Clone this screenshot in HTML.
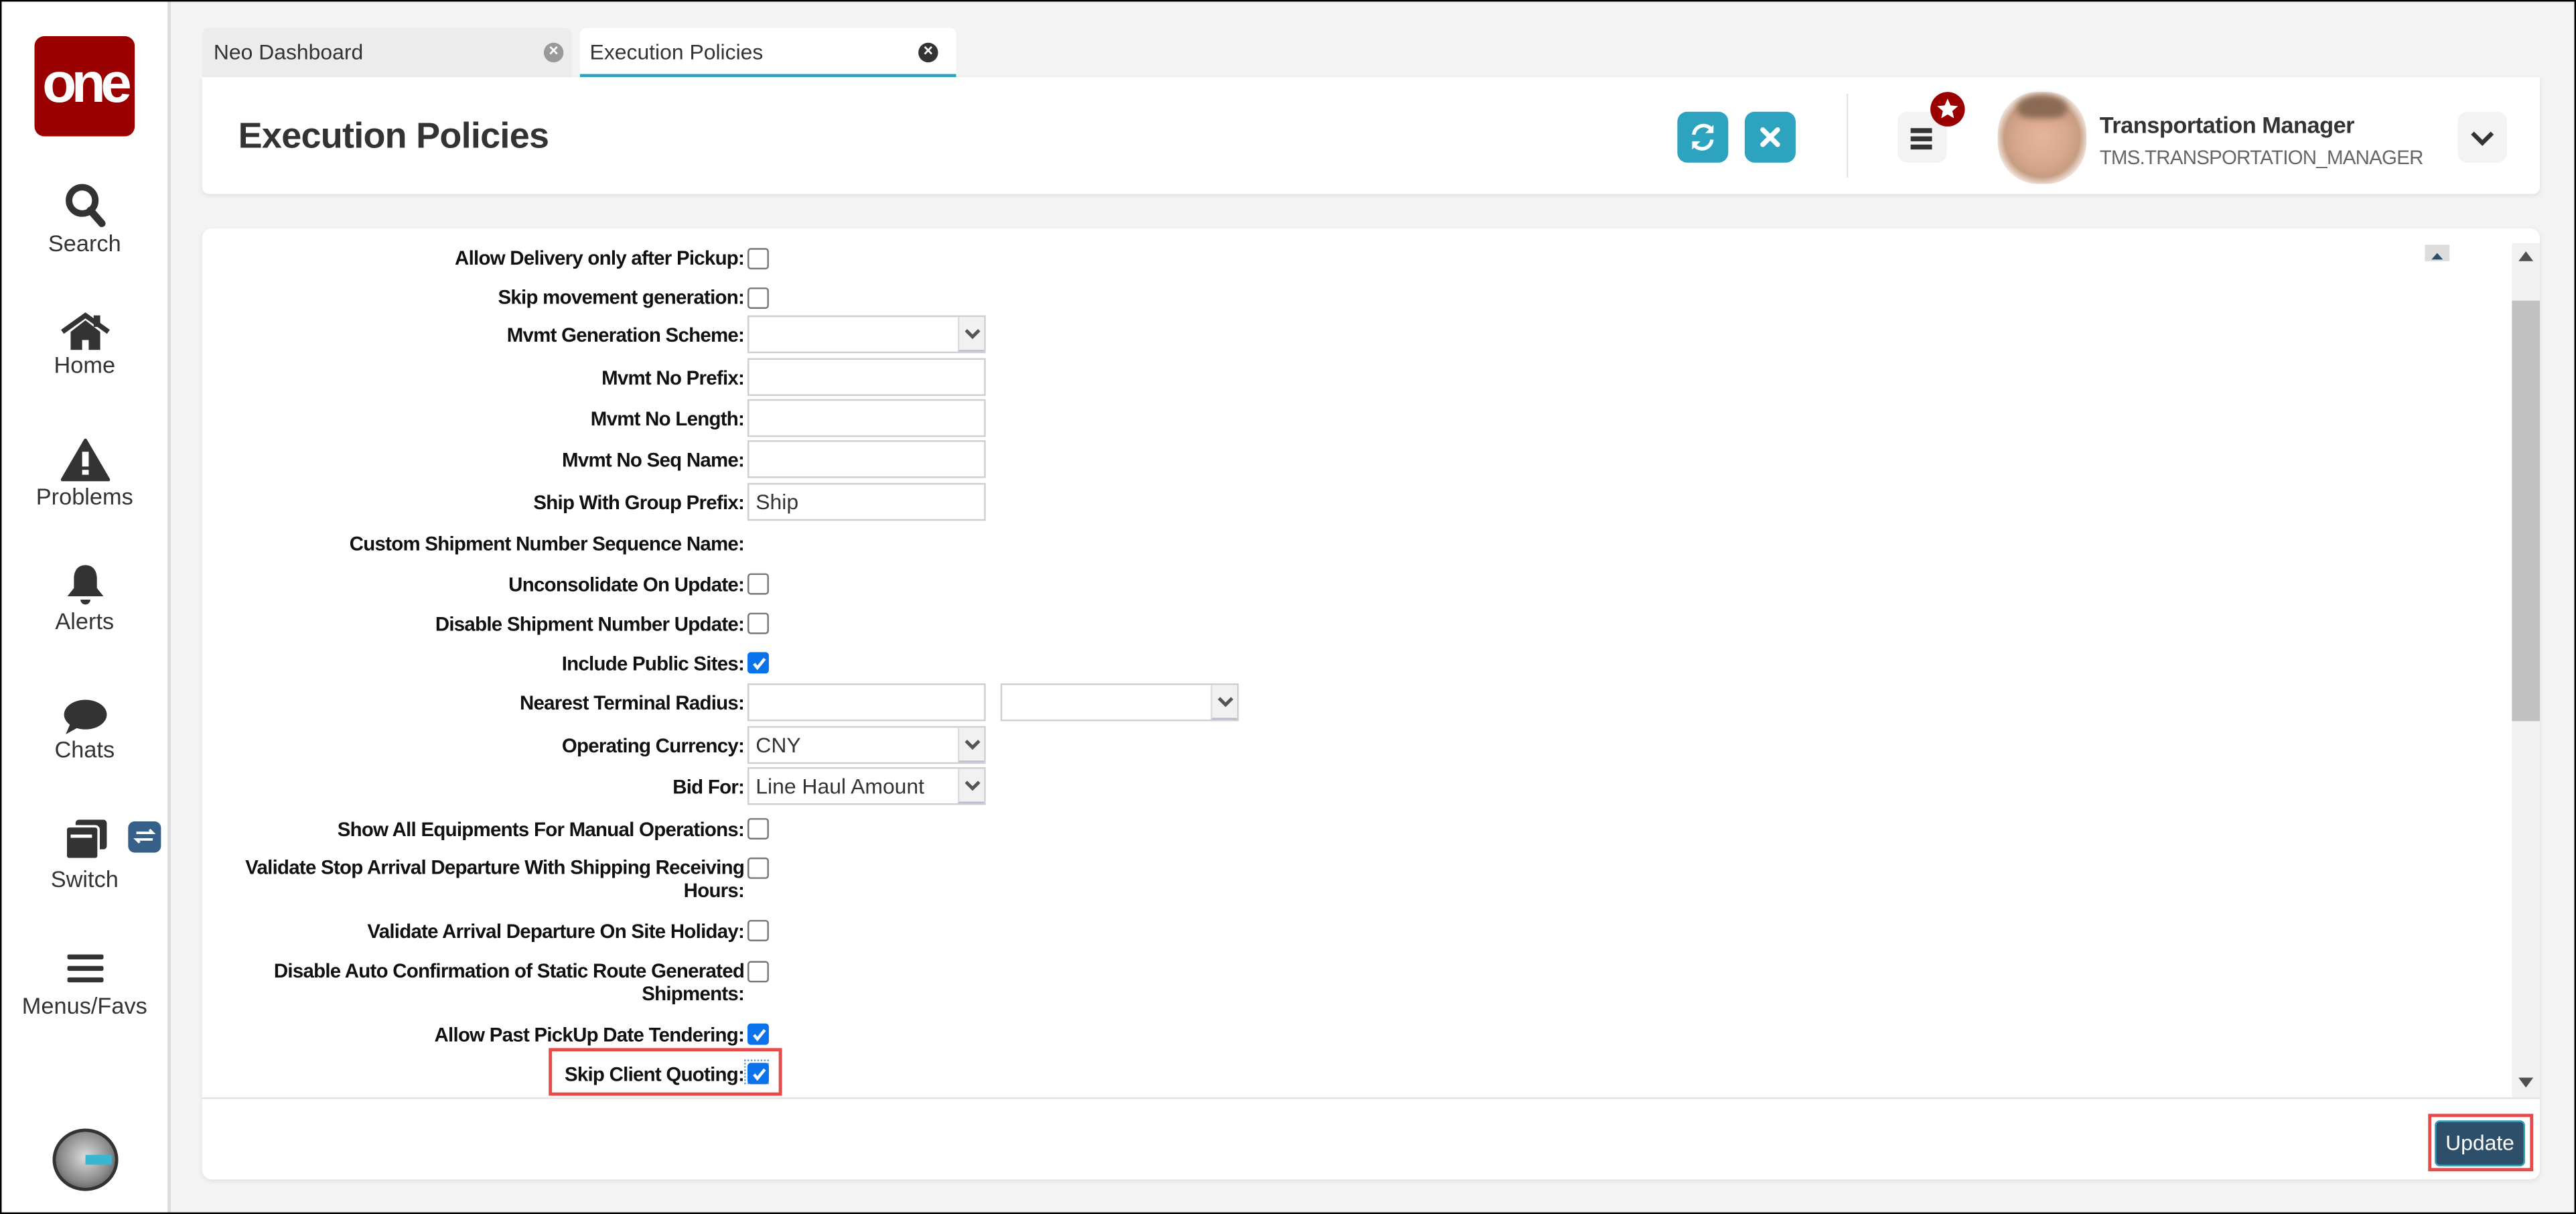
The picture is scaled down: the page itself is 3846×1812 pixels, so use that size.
<!DOCTYPE html>
<html><head><meta charset="utf-8"><style>
html,body{margin:0;padding:0;background:#000;overflow:hidden;}
#root{position:absolute;left:0;top:0;width:1568px;height:739px;transform:scale(2.45281,2.45196);transform-origin:0 0;background:#000;font-family:"Liberation Sans",sans-serif;}
#app{position:absolute;left:1px;top:1px;width:1566px;height:737px;background:#f3f3f3;overflow:hidden;}
.a{position:absolute;}
#side{left:0;top:0;width:101px;height:737px;background:#fff;border-right:2px solid #dcdcdc;}
.nav{position:absolute;left:0;width:101px;text-align:center;font-size:14px;color:#333;}
.nav svg{display:block;margin:0 auto;}
.lbl{position:absolute;right:1114px;font-size:12px;font-weight:bold;color:#111;text-align:right;white-space:nowrap;line-height:14px;letter-spacing:-0.3px;}
.cb{position:absolute;left:454px;width:11px;height:11px;border:1px solid #777;border-radius:2px;background:#fff;}
.cb.on{background:#0a72ea;border-color:#0a72ea;}
.inp{position:absolute;left:454px;width:139px;height:21px;border:1px solid #cfcfcf;background:#fff;font-size:13px;color:#333;line-height:21px;padding-left:4px;box-sizing:content-box;}
.sel{width:139px;}
.sel .ar{position:absolute;right:0;top:0;width:16px;height:21px;background:#f1f1f1;border-left:1px solid #ddd;border-bottom:1px solid #bbbbd0;box-sizing:border-box;}
</style></head><body><div id="root"><div id="app">
<div id="side" class="a">
 <div class="a" style="left:20px;top:21px;width:61px;height:61px;background:#9b0000;border-radius:6px;color:#fff;font-size:34px;font-weight:bold;text-align:center;line-height:58px;letter-spacing:-3px;">one</div>
 <div class="nav" style="top:110px"><svg width="26" height="28" viewBox="0 0 26 28"><circle cx="11" cy="11" r="8" fill="none" stroke="#333" stroke-width="4"/><path d="M16 17l7 8" stroke="#333" stroke-width="4.5" stroke-linecap="round"/></svg><div style="margin-top:1px">Search</div></div>
 <div class="nav" style="top:189px"><svg width="30" height="24" viewBox="0 0 30 24"><path d="M1 12L15 2l14 10" fill="none" stroke="#333" stroke-width="3"/><path d="M6 12v11h7v-6h4v6h7V12L15 5z" fill="#333"/><rect x="20" y="2" width="4" height="7" fill="#333"/></svg><div style="margin-top:0px">Home</div></div>
 <div class="nav" style="top:266px"><svg width="30" height="26" viewBox="0 0 30 26"><path d="M15 1L29 25H1z" fill="#333" stroke="#333" stroke-linejoin="round" stroke-width="2"/><rect x="13" y="8" width="4" height="9" fill="#fff"/><rect x="13" y="19" width="4" height="3" fill="#fff"/></svg><div style="margin-top:1px">Problems</div></div>
 <div class="nav" style="top:342px"><svg width="24" height="26" viewBox="0 0 24 26"><path d="M12 1c-5 0-7 4-7 8v6l-4 5h22l-4-5V9c0-4-2-8-7-8z" fill="#333"/><path d="M9 22a3 3 0 0 0 6 0z" fill="#333"/></svg><div style="margin-top:1px">Alerts</div></div>
 <div class="nav" style="top:424px"><svg width="28" height="24" viewBox="0 0 28 24"><ellipse cx="14" cy="10" rx="13" ry="9" fill="#333"/><path d="M5 15L2 22l9-5z" fill="#333"/></svg><div style="margin-top:-1px">Chats</div></div>
 <div class="nav" style="top:497px"><svg width="28" height="26" viewBox="0 0 28 26"><rect x="8" y="1" width="19" height="18" rx="2" fill="#333"/><rect x="2" y="5" width="20" height="20" rx="2" fill="#333" stroke="#fff" stroke-width="1.5"/><rect x="5" y="10" width="13" height="2" fill="#fff"/></svg><div style="margin-top:3px">Switch</div></div>
 <div class="a" style="left:77px;top:499px;width:20px;height:19px;background:#366087;border-radius:4px;"><svg width="20" height="19" viewBox="0 0 20 19"><path d="M5 7h10l-2-2M15 11H5l2 2" stroke="#fff" stroke-width="1.5" fill="none"/></svg></div>
 <div class="nav" style="top:578px"><svg width="24" height="22" viewBox="0 0 24 22"><rect x="1" y="2" width="22" height="3" rx="1" fill="#333"/><rect x="1" y="9" width="22" height="3" rx="1" fill="#333"/><rect x="1" y="16" width="22" height="3" rx="1" fill="#333"/></svg><div style="margin-top:3px">Menus/Favs</div></div>
 <div class="a" style="left:31px;top:686px;width:40px;height:38px;border-radius:50%;background:radial-gradient(circle at 50% 45%,#ddd,#888 60%,#333);border:2px solid #333;box-sizing:border-box;"><div class="a" style="left:18px;top:14px;width:16px;height:6px;background:#3ab6d0;"></div></div>
</div>
<div class="a" style="left:122px;top:16px;width:225px;height:30px;background:#ececec;border-radius:4px 4px 0 0;font-size:13px;color:#333;line-height:30px;"><span style="margin-left:7px">Neo Dashboard</span>
 <div class="a" style="left:208px;top:9px;width:12px;height:12px;border-radius:50%;background:#999;color:#fff;font-size:10px;line-height:12px;text-align:center;font-weight:bold;">×</div></div>
<div class="a" style="left:352px;top:16px;width:229px;height:28px;background:#fff;border-radius:4px 4px 0 0;border-bottom:2px solid #2ea3bf;font-size:13px;color:#333;line-height:30px;"><span style="margin-left:6px">Execution Policies</span>
 <div class="a" style="left:206px;top:9px;width:12px;height:12px;border-radius:50%;background:#333;color:#fff;font-size:10px;line-height:12px;text-align:center;font-weight:bold;">×</div></div>
<div class="a" style="left:122px;top:46px;width:1423px;height:71px;background:#fff;border-radius:0 0 4px 4px;box-shadow:0 1px 3px rgba(0,0,0,.08);">
 <div class="a" style="left:22px;top:23px;font-size:22px;font-weight:bold;color:#333;letter-spacing:-0.3px;">Execution Policies</div>
 <div class="a" style="left:898px;top:21px;width:31px;height:31px;background:#2ea3bf;border-radius:6px;"><svg width="31" height="31" viewBox="0 0 31 31"><path d="M10 14a6 6 0 0 1 10-4l1 1M21 17a6 6 0 0 1-10 4l-1-1" fill="none" stroke="#fff" stroke-width="2.2"/><path d="M22 8v5h-5zM9 23v-5h5z" fill="#fff"/></svg></div>
 <div class="a" style="left:939px;top:21px;width:31px;height:31px;background:#2ea3bf;border-radius:6px;"><svg width="31" height="31" viewBox="0 0 31 31"><path d="M11 11l9 9M20 11l-9 9" stroke="#fff" stroke-width="3" stroke-linecap="round"/></svg></div>
 <div class="a" style="left:1001px;top:10px;width:1px;height:51px;background:#e6e6e6;"></div>
 <div class="a" style="left:1032px;top:21px;width:30px;height:31px;background:#f3f3f3;border-radius:6px;"><svg width="30" height="31" viewBox="0 0 30 31"><rect x="8" y="10" width="13" height="3" fill="#333"/><rect x="8" y="15" width="13" height="3" fill="#333"/><rect x="8" y="20" width="13" height="3" fill="#333"/></svg></div>
 <div class="a" style="left:1052px;top:9px;width:21px;height:21px;border-radius:50%;background:#9b0000;"><svg width="21" height="21" viewBox="0 0 21 21"><path d="M10.5 4l1.8 4.2 4.5.4-3.4 3 1 4.4-3.9-2.3-3.9 2.3 1-4.4-3.4-3 4.5-.4z" fill="#fff"/></svg></div>
 <div class="a" style="left:1093px;top:9px;width:54px;height:56px;border-radius:45%;background:radial-gradient(ellipse at 50% 50%,#e6b49a 0%,#d9a88e 40%,#c79d82 60%,rgba(255,255,255,0) 78%);"><div class="a" style="left:12px;top:2px;width:30px;height:14px;border-radius:50% 50% 30% 30%;background:#8a6a55;filter:blur(2px);"></div></div>
 <div class="a" style="left:1155px;top:21px;font-size:14px;font-weight:bold;color:#333;letter-spacing:-0.2px;">Transportation Manager</div>
 <div class="a" style="left:1155px;top:42px;font-size:12px;color:#666;letter-spacing:-0.3px;">TMS.TRANSPORTATION_MANAGER</div>
 <div class="a" style="left:1373px;top:21px;width:30px;height:31px;background:#f3f3f3;border-radius:6px;"><svg width="30" height="31" viewBox="0 0 30 31"><path d="M9 13l6 6 6-6" fill="none" stroke="#333" stroke-width="2.6"/></svg></div>
</div>
<div class="a" style="left:122px;top:138px;width:1423px;height:579px;background:#fff;border-radius:6px;box-shadow:0 1px 3px rgba(0,0,0,.08);">
 <div class="a" style="left:0;top:529px;width:1423px;height:1px;background:#e2e2e2;"></div>
 <div class="a" style="left:1406px;top:9px;width:17px;height:520px;background:#f1f1f1;"></div>
 <div class="a" style="left:1406px;top:44px;width:17px;height:256px;background:#c1c1c1;"></div>
 <svg class="a" style="left:1410px;top:14px" width="9" height="6"><path d="M0 6L4.5 0 9 6z" fill="#505050"/></svg>
 <svg class="a" style="left:1410px;top:517px" width="9" height="6"><path d="M0 0h9L4.5 6z" fill="#505050"/></svg>
 <div class="a" style="left:1353px;top:10px;width:15px;height:10px;background:#ddd;"><svg width="15" height="10"><path d="M4 6l3.5-4 3.5 4z" fill="#2d4f69"/></svg></div>
 <div class="a" style="left:1355px;top:539px;width:64px;height:35px;border:2px solid #e84a4a;box-sizing:border-box;"></div>
 <div class="a" style="left:1359px;top:543px;width:55px;height:28px;background:#2d4f69;border:1px solid #2ea3bf;border-radius:3px;box-sizing:border-box;color:#fff;font-size:13px;text-align:center;line-height:26px;">Update</div>
</div>
<div class="lbl" style="top:149px">Allow Delivery only after Pickup:</div><div class="cb" style="top:150px"></div>
<div class="lbl" style="top:173px">Skip movement generation:</div><div class="cb" style="top:174px"></div>
<div class="lbl" style="top:196px">Mvmt Generation Scheme:</div><div class="inp sel" style="top:191px"><div class="ar"><svg width="16" height="21"><path d="M4 8l4 4 4-4" fill="none" stroke="#555" stroke-width="2"/></svg></div></div>
<div class="lbl" style="top:222px">Mvmt No Prefix:</div><div class="inp" style="top:217px"></div>
<div class="lbl" style="top:247px">Mvmt No Length:</div><div class="inp" style="top:242px"></div>
<div class="lbl" style="top:272px">Mvmt No Seq Name:</div><div class="inp" style="top:267px"></div>
<div class="lbl" style="top:298px">Ship With Group Prefix:</div><div class="inp" style="top:293px">Ship</div>
<div class="lbl" style="top:323px">Custom Shipment Number Sequence Name:</div>
<div class="lbl" style="top:348px">Unconsolidate On Update:</div><div class="cb" style="top:348px"></div>
<div class="lbl" style="top:372px">Disable Shipment Number Update:</div><div class="cb" style="top:372px"></div>
<div class="lbl" style="top:396px">Include Public Sites:</div><div class="cb on" style="top:396px"><svg class="a" style="left:1px;top:1px" width="10" height="10"><path d="M2 5l2 2.5L8.5 2" fill="none" stroke="#fff" stroke-width="1.8"/></svg></div>
<div class="lbl" style="top:420px">Nearest Terminal Radius:</div><div class="inp" style="top:415px"></div>
<div class="inp sel" style="top:415px;left:608px;"><div class="ar"><svg width="16" height="21"><path d="M4 8l4 4 4-4" fill="none" stroke="#555" stroke-width="2"/></svg></div></div>
<div class="lbl" style="top:446px">Operating Currency:</div><div class="inp sel" style="top:441px">CNY<div class="ar"><svg width="16" height="21"><path d="M4 8l4 4 4-4" fill="none" stroke="#555" stroke-width="2"/></svg></div></div>
<div class="lbl" style="top:471px">Bid For:</div><div class="inp sel" style="top:466px">Line Haul Amount<div class="ar"><svg width="16" height="21"><path d="M4 8l4 4 4-4" fill="none" stroke="#555" stroke-width="2"/></svg></div></div>
<div class="lbl" style="top:497px">Show All Equipments For Manual Operations:</div><div class="cb" style="top:497px"></div>
<div class="lbl" style="top:520px">Validate Stop Arrival Departure With Shipping Receiving<br>Hours:</div><div class="cb" style="top:521px"></div>
<div class="lbl" style="top:559px">Validate Arrival Departure On Site Holiday:</div><div class="cb" style="top:559px"></div>
<div class="lbl" style="top:583px">Disable Auto Confirmation of Static Route Generated<br>Shipments:</div><div class="cb" style="top:584px"></div>
<div class="lbl" style="top:622px">Allow Past PickUp Date Tendering:</div><div class="cb on" style="top:622px"><svg class="a" style="left:1px;top:1px" width="10" height="10"><path d="M2 5l2 2.5L8.5 2" fill="none" stroke="#fff" stroke-width="1.8"/></svg></div>
<div class="a" style="left:333px;top:637px;width:142px;height:29px;border:2px solid #e84a4a;box-sizing:border-box;"></div>
<div class="a" style="left:452px;top:644px;width:15px;height:15px;border:1px dotted #6aa0d8;box-sizing:border-box;"></div>
<div class="lbl" style="top:646px">Skip Client Quoting:</div><div class="cb on" style="top:646px"><svg class="a" style="left:1px;top:1px" width="10" height="10"><path d="M2 5l2 2.5L8.5 2" fill="none" stroke="#fff" stroke-width="1.8"/></svg></div>
</div></div></body></html>
